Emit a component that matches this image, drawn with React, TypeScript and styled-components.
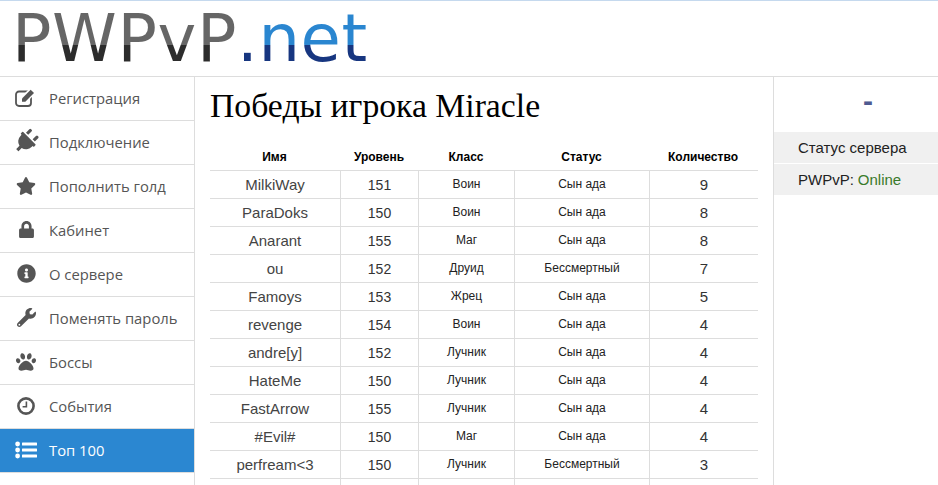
import React from "react";
import styled, { createGlobalStyle } from "styled-components";
import { FaPlug, FaStar, FaLock, FaInfoCircle, FaWrench, FaPaw } from "react-icons/fa";

const Global = createGlobalStyle`
  html, body { margin: 0; padding: 0; height: 100%; overflow: hidden; background: #fff; }
  #root { height: 100%; }
  * { box-sizing: border-box; }
`;

const Page = styled.div`
  width: 938px;
  height: 485px;
  overflow: hidden;
  display: flex;
  flex-direction: column;
  border-top: 1px solid #c5d9ee;
  font-family: "Liberation Sans", Arial, sans-serif;
`;

const Header = styled.header`
  height: 76px;
  flex: none;
  border-bottom: 1px solid #dddddd;
  padding-left: 12px;
  display: flex;
  align-items: flex-start;
`;

const Logo = styled.div`
  display: flex;
  font-family: "DejaVu Sans", sans-serif;
  font-size: 65.5px;
  line-height: 75px;
  height: 75px;
  letter-spacing: 0.6px;
  white-space: nowrap;
`;

const LogoDark = styled.span`
  display: block;
  background: linear-gradient(#666666 0 44px, #2c2c2c 44px);
  -webkit-background-clip: text;
  background-clip: text;
  color: transparent;
`;

const LogoBlue = styled.span`
  display: block;
  background: linear-gradient(#2a86d0 0 44px, #173680 44px);
  -webkit-background-clip: text;
  background-clip: text;
  color: transparent;
`;

const Body = styled.div`
  flex: 1;
  display: flex;
  min-height: 0;
`;

const Sidebar = styled.nav`
  width: 195px;
  flex: none;
  border-right: 1px solid #dddddd;
  font-family: "Open Sans", sans-serif;
`;

const NavItem = styled.a<{ $active?: boolean }>`
  height: 44px;
  display: flex;
  align-items: center;
  padding: 0 0 2px 15px;
  gap: 12px;
  border-bottom: 1px solid #dddddd;
  font-size: 14.8px;
  color: ${(p) => (p.$active ? "#ffffff" : "#555555")};
  background: ${(p) => (p.$active ? "#2b87d1" : "transparent")};
`;

const NavIcon = styled.span<{ $rotate?: number; $size?: number }>`
  width: 22px;
  flex: none;
  display: flex;
  justify-content: center;
  font-size: ${(p) => p.$size ?? 19}px;
  transform: ${(p) => (p.$rotate ? `rotate(${p.$rotate}deg)` : "none")};
`;

const Main = styled.main`
  width: 578px;
  flex: none;
  padding: 0 15px;
`;

const Title = styled.h1`
  margin: 11px 0 0;
  font-family: "Liberation Serif", serif;
  font-weight: 400;
  font-size: 33.7px;
  line-height: 35px;
  color: #000;
`;

const Table = styled.div`
  margin-top: 20px;
  width: 548px;
  display: grid;
  grid-template-columns: 131px 78px 96px 135px 108px;
`;

const HeadCell = styled.div`
  height: 28px;
  padding-right: 2px;
  display: flex;
  align-items: center;
  justify-content: center;
  font-size: 12px;
  font-weight: 700;
  color: #000;
  border-bottom: 1px solid #dddddd;
`;

const Cell = styled.div<{ $size: number; $color?: string; $last?: boolean }>`
  height: 28px;
  padding-bottom: ${(p) => (p.$size < 13 ? 2 : 0)}px;
  display: flex;
  align-items: center;
  justify-content: center;
  border-bottom: 1px solid #dddddd;
  border-right: ${(p) => (p.$last ? "none" : "1px solid #dddddd")};
  font-size: ${(p) => p.$size}px;
  color: ${(p) => p.$color ?? "#333333"};
`;

const Aside = styled.aside`
  flex: 1;
  border-left: 1px solid #dddddd;
`;

const Dash = styled.div`
  height: 55px;
  padding: 0 0 8px 24px;
  display: flex;
  align-items: center;
  justify-content: center;
  font-size: 30px;
  font-weight: 700;
  color: #4f5a91;
`;

const StatusRow = styled.div`
  height: 31px;
  margin-bottom: 1px;
  padding: 0 0 1px 24px;
  display: flex;
  align-items: center;
  background: #f0f0f0;
  font-size: 15px;
  color: #222222;
`;

const Online = styled.span`
  color: #3a7a2a;
  margin-left: 4px;
`;

const EditIcon = () => (
  <svg width="22" height="19" viewBox="0 0 22 19" fill="none">
    <rect x="1" y="3.5" width="15" height="14.5" rx="3" stroke="currentColor" strokeWidth="1.8" />
    <path d="M6.5 10 15.5 1l4 4-9 9H6.5z" fill="#fff" stroke="#fff" strokeWidth="2" />
    <path d="M7 10.5 15.7 1.8l3.3 3.3-8.7 8.7H7z" fill="currentColor" />
  </svg>
);

const ClockIcon = () => (
  <svg width="18" height="18" viewBox="0 0 18 18" fill="none">
    <circle cx="9" cy="9" r="7.6" stroke="currentColor" strokeWidth="2.6" />
    <path d="M9.4 4.5v5.2H5.6" stroke="currentColor" strokeWidth="1.6" />
  </svg>
);

const ListIcon = () => (
  <svg width="22" height="18" viewBox="0 0 22 18" fill="currentColor">
    <circle cx="2.6" cy="3" r="2.4" />
    <circle cx="2.6" cy="9" r="2.4" />
    <circle cx="2.6" cy="15" r="2.4" />
    <rect x="7" y="1.4" width="15" height="3" rx="0.5" />
    <rect x="7" y="7.4" width="15" height="3" rx="0.5" />
    <rect x="7" y="13.4" width="15" height="3" rx="0.5" />
  </svg>
);

const nav = [
  { label: "Регистрация", icon: <NavIcon><EditIcon /></NavIcon> },
  { label: "Подключение", icon: <NavIcon $rotate={45} $size={25}><FaPlug /></NavIcon> },
  { label: "Пополнить голд", icon: <NavIcon $size={20}><FaStar /></NavIcon> },
  { label: "Кабинет", icon: <NavIcon $size={17}><FaLock /></NavIcon> },
  { label: "О сервере", icon: <NavIcon $size={19}><FaInfoCircle /></NavIcon> },
  { label: "Поменять пароль", icon: <NavIcon><FaWrench /></NavIcon> },
  { label: "Боссы", icon: <NavIcon $size={20}><FaPaw /></NavIcon> },
  { label: "События", icon: <NavIcon><ClockIcon /></NavIcon> },
  { label: "Топ 100", icon: <NavIcon><ListIcon /></NavIcon>, active: true },
];

const rows: [string, string, string, string, string][] = [
  ["MilkiWay", "151", "Воин", "Сын ада", "9"],
  ["ParaDoks", "150", "Воин", "Сын ада", "8"],
  ["Anarant", "155", "Маг", "Сын ада", "8"],
  ["ou", "152", "Друид", "Бессмертный", "7"],
  ["Famoys", "153", "Жрец", "Сын ада", "5"],
  ["revenge", "154", "Воин", "Сын ада", "4"],
  ["andre[y]", "152", "Лучник", "Сын ада", "4"],
  ["HateMe", "150", "Лучник", "Сын ада", "4"],
  ["FastArrow", "155", "Лучник", "Сын ада", "4"],
  ["#Evil#", "150", "Маг", "Сын ада", "4"],
  ["perfream<3", "150", "Лучник", "Бессмертный", "3"],
  ["\u00a0", "\u00a0", "\u00a0", "\u00a0", "\u00a0"],
];

export default function App() {
  return (
    <Page>
      <Global />
      <Header>
        <Logo>
          <LogoDark>PWPvP</LogoDark>
          <LogoBlue>.net</LogoBlue>
        </Logo>
      </Header>
      <Body>
        <Sidebar>
          {nav.map((n) => (
            <NavItem key={n.label} $active={n.active}>
              {n.icon}
              {n.label}
            </NavItem>
          ))}
        </Sidebar>
        <Main>
          <Title>Победы игрока Miracle</Title>
          <Table>
            {["Имя", "Уровень", "Класс", "Статус", "Количество"].map((h) => (
              <HeadCell key={h}>{h}</HeadCell>
            ))}
            {rows.map((r, i) => (
              <React.Fragment key={i}>
                <Cell $size={15} $color="#444444">{r[0]}</Cell>
                <Cell $size={14}>{r[1]}</Cell>
                <Cell $size={12} $color="#222222">{r[2]}</Cell>
                <Cell $size={12} $color="#222222">{r[3]}</Cell>
                <Cell $size={15} $last>{r[4]}</Cell>
              </React.Fragment>
            ))}
          </Table>
        </Main>
        <Aside>
          <Dash>-</Dash>
          <StatusRow>Статус сервера</StatusRow>
          <StatusRow>
            PWPvP:<Online>Online</Online>
          </StatusRow>
        </Aside>
      </Body>
    </Page>
  );
}
